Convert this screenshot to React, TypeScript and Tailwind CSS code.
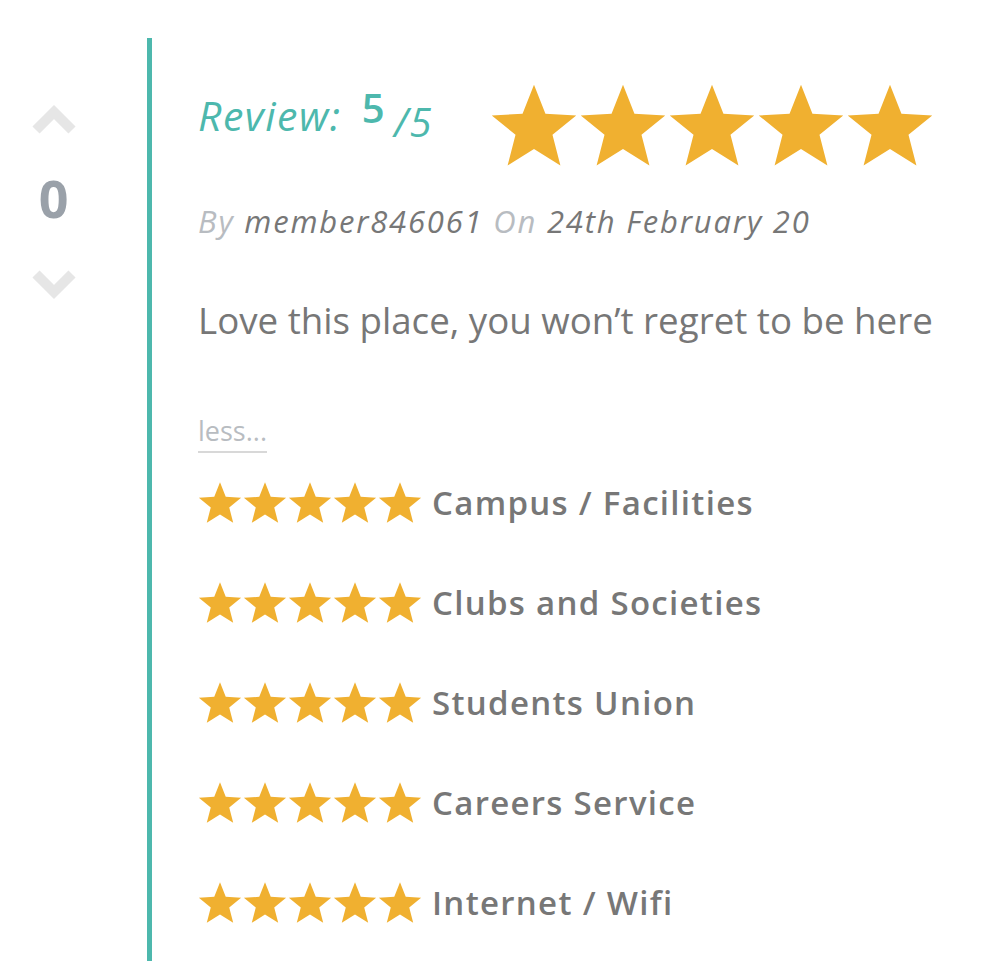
import React from "react";

function Star({ size }: { size: number }) {
  return (
    <svg width={size} height={size} viewBox="0 0 100 100" className="shrink-0">
      <polygon
        points="50,3 63,36 98,38 71,60 80,95 50,76 20,95 29,60 2,38 37,36"
        fill="#f0b030"
      />
    </svg>
  );
}

const rows = ["Campus / Facilities", "Clubs and Societies", "Students Union", "Careers Service", "Internet / Wifi"];

export default function App() {
  return (
    <div className="w-[990px] h-[961px] bg-white flex overflow-hidden" style={{ fontFamily: "'Open Sans', Lato, sans-serif" }}>
      <div className="w-[147px] shrink-0 flex flex-col items-center pt-[104px] pr-[40px]">
        <svg width="44" height="30" viewBox="0 0 44 30">
          <polyline points="4,26 22,8 40,26" fill="none" stroke="#e6e6e6" strokeWidth="10" />
        </svg>
        <div className="text-[52px] font-bold text-[#9aa1a9] leading-none mt-[38px]">0</div>
        <svg width="44" height="30" viewBox="0 0 44 30" className="mt-[46px]">
          <polyline points="4,4 22,22 40,4" fill="none" stroke="#e6e6e6" strokeWidth="10" />
        </svg>
      </div>
      <div className="mt-[38px] border-l-[5px] border-[#4db8ad] pl-[46px] flex-1 flex flex-col">
        <div className="flex items-center mt-[44px]">
          <div className="italic text-[#4db8ad] text-[41px] tracking-[1.5px] w-[292px] flex items-baseline leading-none relative top-[-11px]">
            <span>Review:</span>
            <span className="ml-[20px] text-[40px] not-italic font-semibold relative top-[-8px]">5</span>
            <span className="ml-[8px] text-[40px] relative top-[6px]">/5</span>
          </div>
          <div className="flex gap-[1px]">
            {[0, 1, 2, 3, 4].map((i) => (
              <Star key={i} size={88} />
            ))}
          </div>
        </div>
        <div className="italic text-[31px] tracking-[1.8px] mt-[36px] leading-none">
          <span className="text-[#b8bcc1]">By </span>
          <span className="text-[#777]">member846061 </span>
          <span className="text-[#b8bcc1]">On </span>
          <span className="text-[#777]">24th February 20</span>
        </div>
        <div className="text-[36.7px] text-[#777] mt-[65px] leading-none">Love this place, you won’t regret to be here</div>
        <div className="mt-[78px]">
          <span className="text-[27px] text-[#b8bcc1] border-b-2 border-[#d8d8d8] leading-none pb-[2px]">less...</span>
        </div>
        <div className="flex flex-col gap-[56px] mt-[34px]">
          {rows.map((r) => (
            <div key={r} className="flex items-center">
              <div className="flex gap-[1px]">
                {[0, 1, 2, 3, 4].map((i) => (
                  <Star key={i} size={44} />
                ))}
              </div>
              <span className="ml-[10px] text-[33px] tracking-[1.3px] font-semibold text-[#777] leading-none">{r}</span>
            </div>
          ))}
        </div>
      </div>
    </div>
  );
}
